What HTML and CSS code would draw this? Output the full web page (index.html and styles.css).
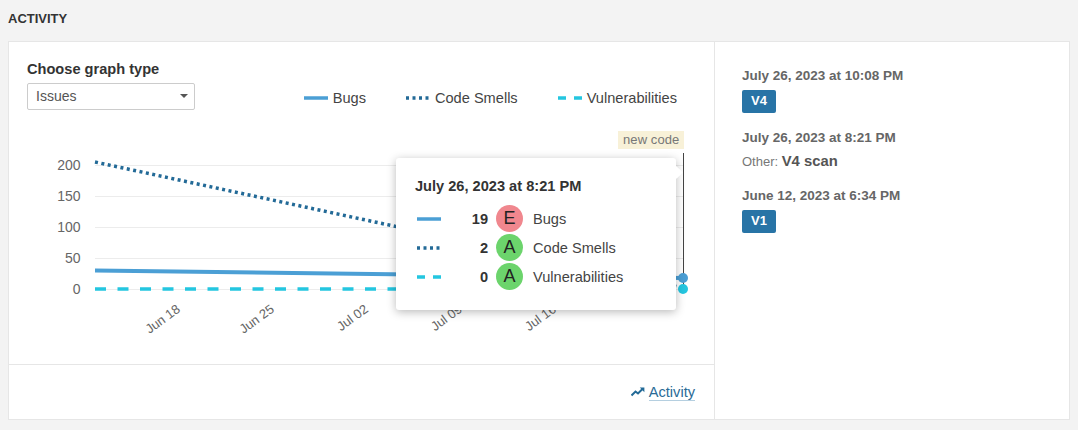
FILE: index.html
```html
<!DOCTYPE html>
<html lang="en">
<head>
    <meta charset="UTF-8">
    <meta name="viewport" content="width=device-width, initial-scale=1.0">
    <title>Activity</title>
    <link rel="stylesheet" href="styles.css">
</head>
<body>
    <h2 class="page-title">ACTIVITY</h2>
    <div class="card">
        <div class="graph-panel">
            <div class="graph-top">
                <div class="graph-picker">
                    <label class="picker-label">Choose graph type</label>
                    <div class="select-box">
                        <span>Issues</span>
                        <span class="select-arrow"></span>
                    </div>
                </div>
                <ul class="legend">
                    <li class="legend-item">
                        <svg class="line-key" width="24" height="6"><line x1="0" y1="3" x2="24" y2="3" class="key-bugs"/></svg>
                        Bugs
                    </li>
                    <li class="legend-item">
                        <svg class="line-key" width="24" height="6"><line x1="0" y1="3" x2="24" y2="3" class="key-smells"/></svg>
                        Code Smells
                    </li>
                    <li class="legend-item">
                        <svg class="line-key" width="24" height="6"><line x1="0" y1="3" x2="24" y2="3" class="key-vulns"/></svg>
                        Vulnerabilities
                    </li>
                </ul>
            </div>
            <div class="chart">
                <!-- viewBox uses page coordinates to keep the plot numbers simple -->
                <svg class="chart-svg" width="705" height="254" viewBox="9 110 705 254">
                    <line class="grid" x1="95" y1="165.5" x2="683" y2="165.5"/>
                    <line class="grid" x1="95" y1="196.5" x2="683" y2="196.5"/>
                    <line class="grid" x1="95" y1="227.5" x2="683" y2="227.5"/>
                    <line class="grid" x1="95" y1="258.5" x2="683" y2="258.5"/>
                    <line class="grid" x1="95" y1="289.5" x2="683" y2="289.5"/>
                    <text class="y-label" x="80.5" y="170">200</text>
                    <text class="y-label" x="80.5" y="201">150</text>
                    <text class="y-label" x="80.5" y="232">100</text>
                    <text class="y-label" x="80.5" y="263">50</text>
                    <text class="y-label" x="80.5" y="294">0</text>
                    <text class="x-label" transform="translate(181 311) rotate(-36)">Jun 18</text>
                    <text class="x-label" transform="translate(275 311) rotate(-36)">Jun 25</text>
                    <text class="x-label" transform="translate(369 311) rotate(-36)">Jul 02</text>
                    <text class="x-label" transform="translate(463 311) rotate(-36)">Jul 09</text>
                    <text class="x-label" transform="translate(557 311) rotate(-36)">Jul 16</text>
                    <line class="series-bugs" x1="95" y1="270.5" x2="683" y2="278"/>
                    <line class="series-smells" x1="95" y1="162" x2="683" y2="288"/>
                    <line class="series-vulns" x1="95" y1="289" x2="683" y2="289"/>
                    <line class="marker" x1="683.5" y1="153" x2="683.5" y2="289"/>
                    <circle class="dot-bugs" cx="683" cy="278" r="5"/>
                    <circle class="dot-vulns" cx="683" cy="289" r="5"/>
                </svg>
                <span class="new-code">new code</span>
                <div class="tooltip">
                    <div class="tooltip-title">July 26, 2023 at 8:21 PM</div>
                    <div class="tooltip-row">
                        <svg class="line-key" width="24" height="6"><line x1="0" y1="3" x2="24" y2="3" class="key-bugs"/></svg>
                        <span class="tooltip-value">19</span>
                        <span class="rating rating-e">E</span>
                        <span>Bugs</span>
                    </div>
                    <div class="tooltip-row">
                        <svg class="line-key" width="24" height="6"><line x1="0" y1="3" x2="24" y2="3" class="key-smells"/></svg>
                        <span class="tooltip-value">2</span>
                        <span class="rating rating-a">A</span>
                        <span>Code Smells</span>
                    </div>
                    <div class="tooltip-row">
                        <svg class="line-key" width="24" height="6"><line x1="0" y1="3" x2="24" y2="3" class="key-vulns"/></svg>
                        <span class="tooltip-value">0</span>
                        <span class="rating rating-a">A</span>
                        <span>Vulnerabilities</span>
                    </div>
                </div>
            </div>
            <div class="graph-footer">
                <a class="activity-link" href="#">
                    <svg class="activity-icon" width="14" height="10" viewBox="0 0 14 10">
                        <path d="M0.5 8.5L4.5 4.5L7 6.5L11.5 2"/>
                        <path class="arrow-head" d="M8.8 0.6H13.4V5.2Z"/>
                    </svg>
                    <span class="activity-text">Activity</span>
                </a>
            </div>
        </div>
        <div class="events">
            <div class="event">
                <div class="event-date">July 26, 2023 at 10:08 PM</div>
                <span class="version-tag">V4</span>
            </div>
            <div class="event">
                <div class="event-date">July 26, 2023 at 8:21 PM</div>
                <div class="event-note">Other: <strong>V4 scan</strong></div>
            </div>
            <div class="event">
                <div class="event-date">June 12, 2023 at 6:34 PM</div>
                <span class="version-tag">V1</span>
            </div>
        </div>
    </div>
</body>
</html>
```

FILE: styles.css
```css
body {
    font-family: "Liberation Sans", Arial, sans-serif;
    font-size: 14.6px;
    color: #444;
    background-color: #f3f3f3;
    margin: 0;
    padding: 12px 8px 10px;
}

.page-title {
    margin: 0 0 16px;
    font-size: 13px;
    line-height: 13px;
    font-weight: bold;
    color: #333;
}

.card {
    display: flex;
    height: 377px;
    background-color: #fff;
    border: 1px solid #e6e6e6;
}

.graph-panel {
    display: flex;
    flex-direction: column;
    width: 705px;
    border-right: 1px solid #e6e6e6;
}

.graph-top {
    display: flex;
    justify-content: space-between;
    height: 68px;
    box-sizing: border-box;
    padding: 19px 37px 0 18px;
}

.picker-label {
    display: block;
    margin-bottom: 6px;
    font-weight: bold;
    color: #333;
    line-height: 16px;
}

.select-box {
    display: flex;
    justify-content: space-between;
    align-items: center;
    width: 168px;
    height: 27px;
    box-sizing: border-box;
    padding: 0 6px 2px 8px;
    border: 1px solid #ccc;
    border-radius: 2px;
    font-size: 14px;
    color: #555;
}

.select-arrow {
    border-left: 4px solid transparent;
    border-right: 4px solid transparent;
    border-top: 4px solid #555;
}

.legend {
    display: flex;
    gap: 40px;
    list-style: none;
    margin: 0;
    padding: 25px 0 0;
    line-height: 16px;
}

.legend-item {
    display: flex;
    align-items: center;
    gap: 5px;
}

.line-key line {
    stroke-width: 3.5;
}

.key-bugs {
    stroke: #4b9fd5;
}

.key-smells {
    stroke: #236a97;
    stroke-dasharray: 3 3.5;
}

.key-vulns {
    stroke: #24c6e0;
    stroke-dasharray: 8 8;
}

.chart {
    position: relative;
    height: 254px;
}

.chart-svg {
    display: block;
}

.grid {
    stroke: #ececec;
    stroke-width: 1;
}

.y-label {
    font-size: 14px;
    fill: #666;
    text-anchor: end;
}

.x-label {
    font-size: 13px;
    fill: #666;
    text-anchor: end;
}

.series-bugs {
    stroke: #4b9fd5;
    stroke-width: 4;
}

.series-smells {
    stroke: #236a97;
    stroke-width: 3.5;
    stroke-dasharray: 3 3.5;
}

.series-vulns {
    stroke: #24c6e0;
    stroke-width: 3.5;
    stroke-dasharray: 11 11.5;
}

.marker {
    stroke: #444;
    stroke-width: 1;
}

.dot-bugs {
    fill: #4b9fd5;
}

.dot-vulns {
    fill: #24c6e0;
}

.new-code {
    position: absolute;
    left: 609px;
    top: 21px;
    padding: 0 5px;
    height: 18px;
    line-height: 18px;
    font-size: 13px;
    letter-spacing: 0.1px;
    color: #777;
    background-color: #f8f1d8;
}

.tooltip {
    position: absolute;
    left: 387px;
    top: 48px;
    width: 280px;
    height: 152px;
    box-sizing: border-box;
    padding: 20px 19px;
    background-color: #fff;
    border-radius: 3px;
    box-shadow: 0 2px 10px rgba(0, 0, 0, 0.28);
}

.tooltip::after {
    content: "";
    position: absolute;
    right: -5px;
    top: 10px;
    width: 9px;
    height: 9px;
    background-color: #fff;
    transform: rotate(45deg);
}

.tooltip-title {
    margin-bottom: 11px;
    font-weight: bold;
    color: #333;
    line-height: 16px;
}

.tooltip-row {
    display: flex;
    align-items: center;
    height: 27px;
    margin-bottom: 2px;
}

.tooltip-row .line-key {
    margin-left: 2px;
}

.tooltip-value {
    width: 47px;
    margin-right: 8px;
    text-align: right;
    font-weight: bold;
    color: #333;
}

.rating {
    width: 27px;
    height: 27px;
    margin-right: 10px;
    border-radius: 50%;
    text-align: center;
    line-height: 27px;
    font-size: 18px;
    color: #222;
}

.rating-e {
    background-color: #f0878e;
}

.rating-a {
    background-color: #6cd46c;
}

.graph-footer {
    display: flex;
    justify-content: flex-end;
    flex: 1;
    padding: 18px 19px 0 0;
    border-top: 1px solid #e6e6e6;
}

.activity-link {
    display: flex;
    align-items: center;
    gap: 4px;
    height: 18px;
    color: #2a6b96;
    text-decoration: none;
}

.activity-icon path {
    fill: none;
    stroke: #236a97;
    stroke-width: 2;
}

.activity-icon .arrow-head {
    fill: #236a97;
    stroke: none;
}

.activity-text {
    border-bottom: 1px solid #b5cfe0;
    line-height: 16px;
}

.events {
    flex: 1;
    padding: 27px 27px 0;
}

.event {
    margin-bottom: 18px;
}

.event-date {
    margin-bottom: 7px;
    font-size: 13.5px;
    font-weight: bold;
    line-height: 14px;
    color: #666;
}

.version-tag {
    display: block;
    width: 34px;
    height: 23px;
    line-height: 22px;
    text-align: center;
    border-radius: 2px;
    background-color: #2874a6;
    color: #fff;
    font-size: 13px;
    font-weight: bold;
}

.event-note {
    font-size: 13px;
    line-height: 18px;
    color: #777;
}

.event-note strong {
    font-size: 14.8px;
    color: #555;
}
```
